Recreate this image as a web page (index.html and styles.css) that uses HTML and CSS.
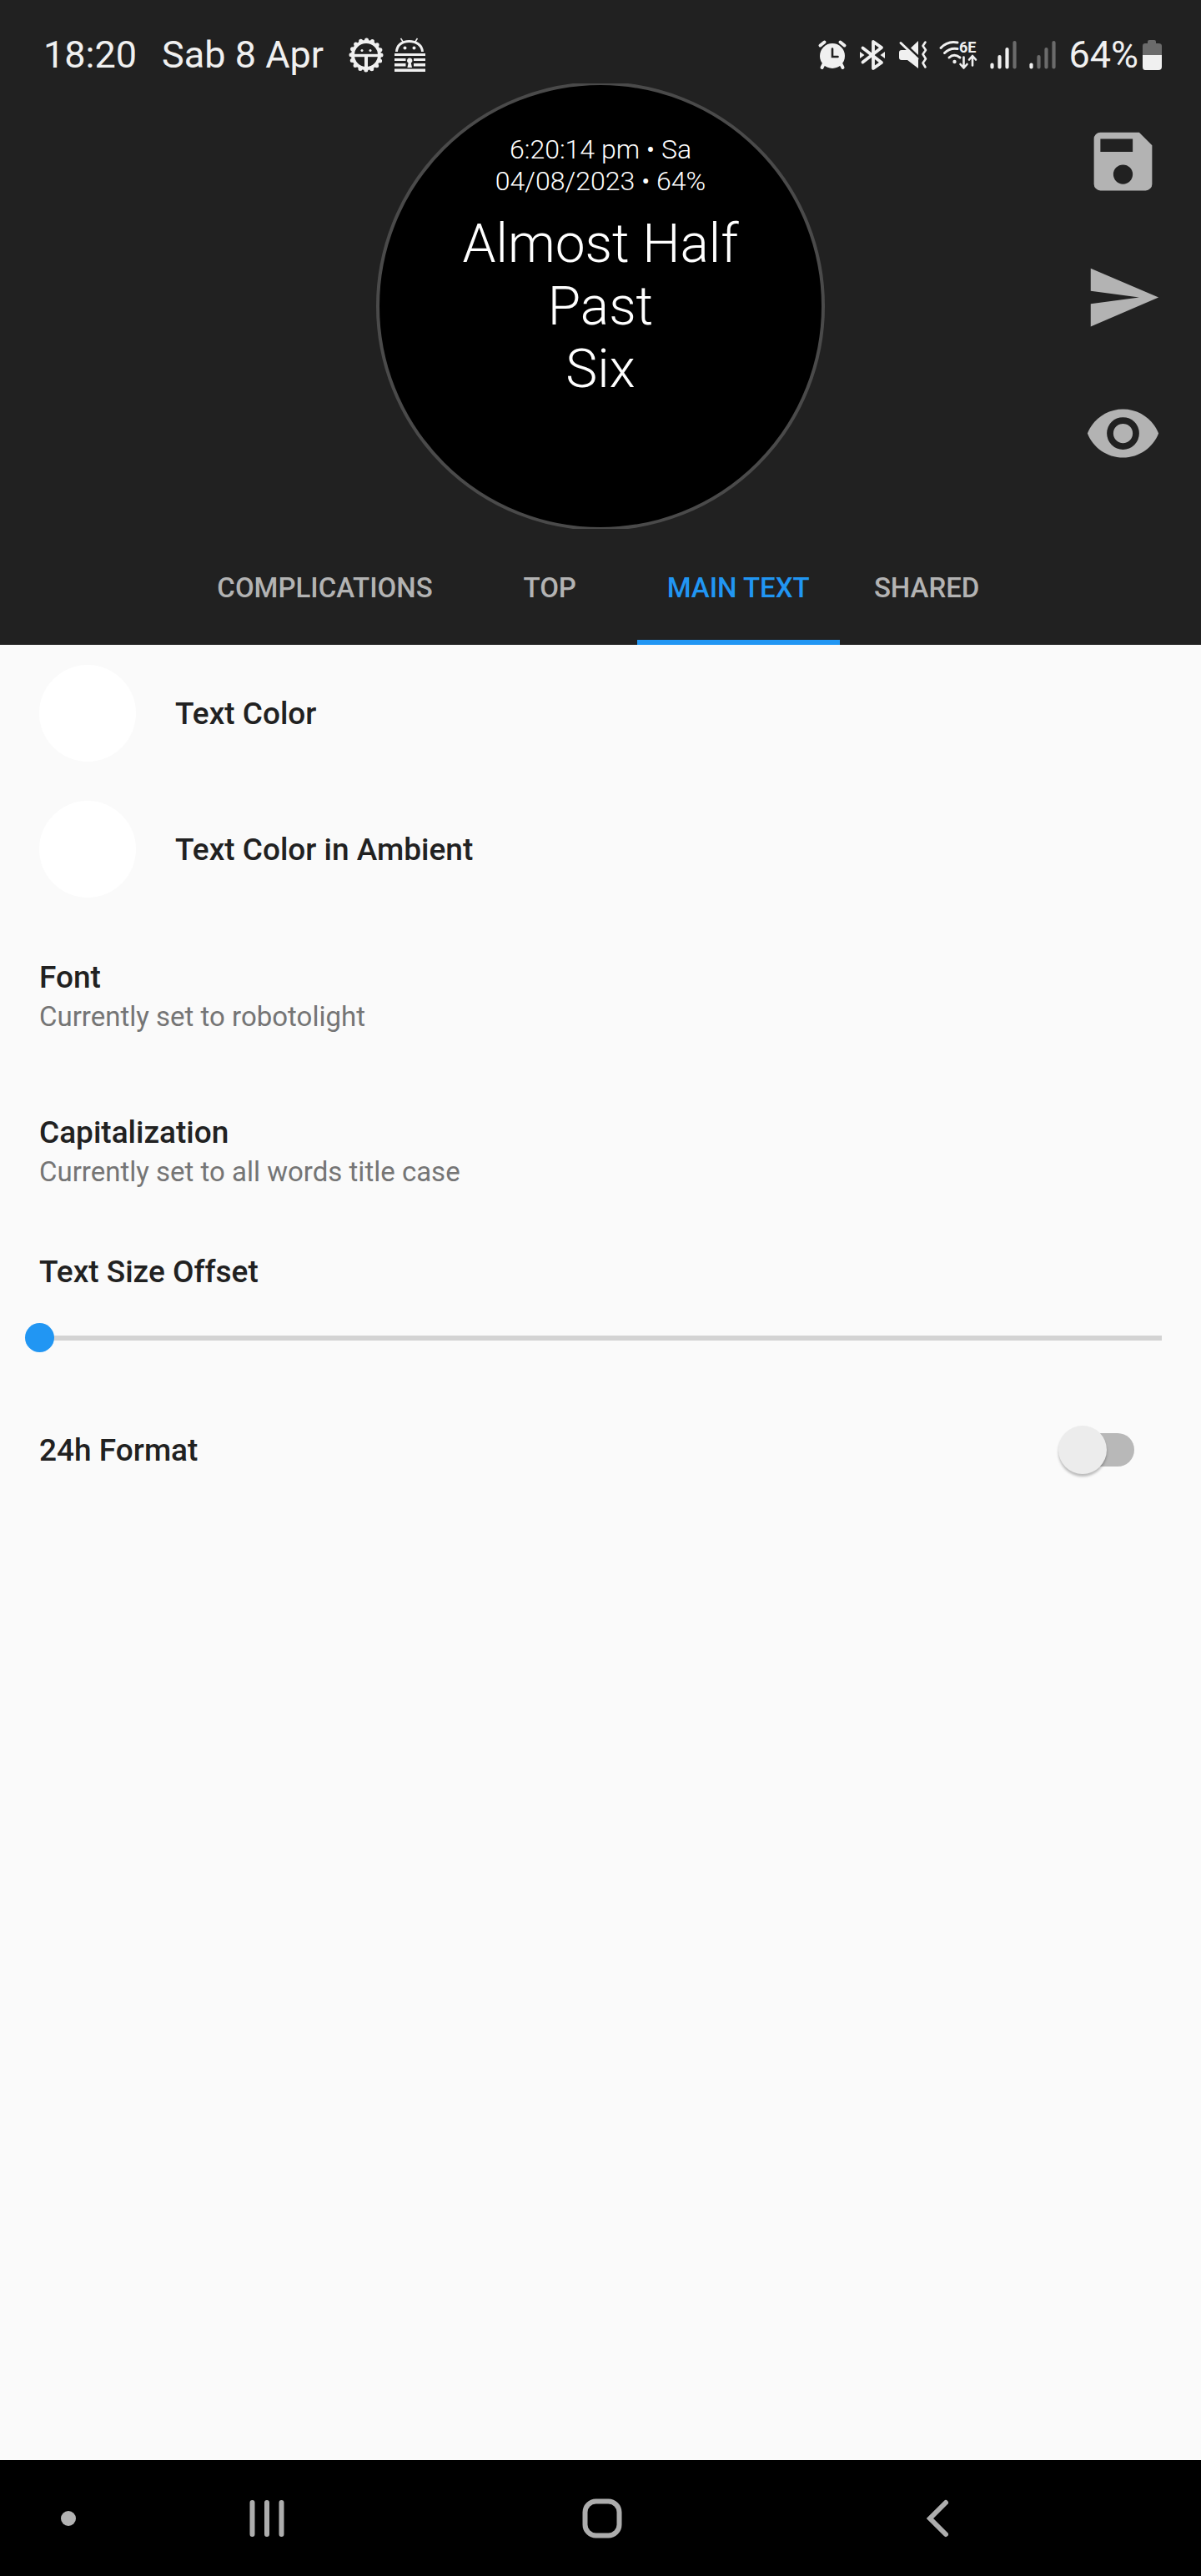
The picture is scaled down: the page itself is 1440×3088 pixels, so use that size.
FILE: index.html
```html
<!DOCTYPE html>
<html lang="en">
<head>
<meta charset="utf-8">
<meta name="viewport" content="width=device-width, initial-scale=1">
<title>Watch face settings</title>
<link rel="stylesheet" href="styles.css">
</head>
<body>
<header class="header">
  <div class="status">
    <div class="status-left">
      <time>18:20</time>
      <span>Sab 8 Apr</span>
      <div class="notifications">
        <svg width="42" height="42" viewBox="0 0 42 42" fill="none" stroke="currentColor" aria-hidden="true">
          <circle cx="21" cy="21" r="16" stroke-width="4"/>
          <circle cx="21" cy="21" r="18" stroke-width="5" stroke-linecap="round" stroke-dasharray="0 7.069"/>
          <path d="M6 21.500h30" stroke-width="3.400"/>
          <path d="M21 22v14" stroke-width="4"/>
          <g fill="currentColor" stroke="none"><circle cx="16" cy="15.500" r="1.500"/><circle cx="26" cy="15.500" r="1.500"/></g>
        </svg>
        <svg width="38" height="42" viewBox="0 0 38 42" aria-hidden="true">
          <path d="M3.500 17C4 9 10 4.500 18.500 4.500S34 9 34.500 17" fill="none" stroke="currentColor" stroke-width="3"/>
          <path d="M8.500 1l3 4.500M28.500 1l-3 4.500" stroke="currentColor" stroke-width="1.500"/>
          <g fill="currentColor">
            <circle cx="13.500" cy="12.500" r="2"/><circle cx="24.500" cy="12.500" r="2"/>
            <path d="M1 19h37v3H1zM1 25h13.500v3H1zM24 25h14v3H24zM1 31h13.500v3.500H1zM24 31h14v3.500H24zM1 37.500h37v3.500H1z"/>
            <path d="M19.200 24.500a3.200 3.200 0 0 1 1.600 6l1.200 5.500h-5.600l1.200-5.500a3.200 3.200 0 0 1 1.600-6z"/>
          </g>
        </svg>
      </div>
    </div>
    <div class="status-right">
      <svg width="34" height="36" viewBox="0 0 34 36" fill="none" stroke="currentColor" stroke-linecap="round" aria-hidden="true">
        <circle cx="17" cy="19" r="15" fill="currentColor" stroke="none"/>
        <path d="M2.500 6.500l5-4M31.500 6.500l-5-4" stroke-width="4"/>
        <path d="M6.500 29l-2 4M27.500 29l2 4" stroke-width="4"/>
        <path d="M17 10.500V20h6.500" stroke="#212121" stroke-width="2.600"/>
      </svg>
      <svg width="32" height="36" viewBox="0 0 32 36" fill="none" stroke="currentColor" stroke-linecap="round" stroke-linejoin="round" aria-hidden="true">
        <path d="M4.500 9.500L27 27 17 34V2l10 7L4.500 26.500" stroke-width="3.800"/>
        <path d="M1 14l5.500 4L1 22zM31 14l-5.500 4 5.500 4z" fill="currentColor" stroke="none"/>
      </svg>
      <svg width="34" height="36" viewBox="0 0 34 36" fill="none" stroke="currentColor" stroke-linecap="round" stroke-linejoin="round" aria-hidden="true">
        <path d="M4 12h7l13 12v10L11 24H4q-3 0-3-3v-6q0-3 3-3z" fill="currentColor" stroke="none"/>
        <path d="M24 1v17l-9-8.500z" fill="currentColor" stroke="none"/>
        <path d="M3 3.500l20 19" stroke-width="3"/>
        <path d="M32.500 2.500l-3 4.500 3.500 5-3.500 5 3.500 5.500-3.500 5 3 5" stroke-width="2.600"/>
      </svg>
      <svg class="wifi" width="46" height="36" viewBox="0 0 46 36" fill="none" stroke="currentColor" stroke-linecap="round" stroke-linejoin="round" aria-hidden="true">
        <path d="M2 9.500C8 3 15 1.500 22 3" stroke-width="3"/>
        <path d="M6.500 15.500Q13 9 22 10.500" stroke-width="3"/>
        <path d="M12 21q6-5.500 13 0" stroke-width="3"/>
        <circle cx="18.500" cy="26" r="2.200" fill="currentColor" stroke="none"/>
        <path d="M29.500 20.500V33m-4-4l4 4.500 4-4.500" stroke-width="2.600"/>
        <path d="M40 30.500V19.500m-4 4l4-4.500 4 4.500" stroke-width="2.600"/>
        <text x="24" y="15" fill="currentColor" stroke="none">6E</text>
      </svg>
      <svg width="32" height="36" viewBox="0 0 32 36" stroke="currentColor" stroke-width="4.200" stroke-linecap="round" aria-hidden="true">
        <path d="M2.500 29.500v3M11.500 20v12.500M20.500 11v21.500"/>
        <path d="M29.500 3v29.500" stroke="#6b6b6b"/>
      </svg>
      <svg width="32" height="36" viewBox="0 0 32 36" stroke="currentColor" stroke-width="4.200" stroke-linecap="round" aria-hidden="true">
        <path d="M2.500 29.500v3"/>
        <path d="M11.500 20v12.500M20.500 11v21.500M29.500 3v29.500" stroke="#6b6b6b"/>
      </svg>
      <div class="battery">
        <span>64%</span>
        <svg width="24" height="36" viewBox="0 0 24 36" aria-hidden="true">
          <path d="M1 18V7q0-3 3-3h3V2q0-2 2-2h6q2 0 2 2v2h3q4 0 4 3v11z" fill="#6b6b6b"/>
          <path d="M1 18h23v14q0 4-4 4H4q-3 0-3-4z" fill="currentColor"/>
        </svg>
      </div>
    </div>
  </div>

  <div class="preview">
    <div class="watch">
      <p class="watch-top">6:20:14 pm • Sa<br>04/08/2023 • 64%</p>
      <p class="watch-main">Almost Half<br>Past<br>Six</p>
    </div>
    <div class="actions">
      <button type="button" aria-label="Save"><svg viewBox="0 0 24 24" fill="currentColor"><path d="M15 9H5V5h10m-3 14a3 3 0 0 1-3-3 3 3 0 0 1 3-3 3 3 0 0 1 3 3 3 3 0 0 1-3 3m5-16H5a2 2 0 0 0-2 2v14a2 2 0 0 0 2 2h14a2 2 0 0 0 2-2V7l-4-4z"/></svg></button>
      <button type="button" aria-label="Send"><svg viewBox="0 0 24 24" fill="currentColor"><path d="M2 3v7l15 2-15 2v7l21-9z"/></svg></button>
      <button type="button" aria-label="Preview"><svg viewBox="0 0 24 24" fill="currentColor"><path d="M12 9a3 3 0 0 0-3 3 3 3 0 0 0 3 3 3 3 0 0 0 3-3 3 3 0 0 0-3-3m0 8a5 5 0 0 1-5-5 5 5 0 0 1 5-5 5 5 0 0 1 5 5 5 5 0 0 1-5 5m0-12.500C7 4.500 2.730 7.610 1 12c1.730 4.390 6 7.500 11 7.500s9.270-3.110 11-7.500c-1.730-4.390-6-7.500-11-7.500z"/></svg></button>
    </div>
  </div>

  <nav class="tabs">
    <a href="#complications">COMPLICATIONS</a>
    <a href="#top">TOP</a>
    <a href="#main-text" class="active" aria-current="page">MAIN TEXT</a>
    <a href="#shared">SHARED</a>
  </nav>
</header>

<main class="settings">
  <button type="button" class="color-row"><span class="swatch"></span><span class="title">Text Color</span></button>
  <button type="button" class="color-row"><span class="swatch"></span><span class="title">Text Color in Ambient</span></button>
  <button type="button" class="choice-row"><span class="title">Font</span><span class="summary">Currently set to robotolight</span></button>
  <button type="button" class="choice-row"><span class="title">Capitalization</span><span class="summary">Currently set to all words title case</span></button>
  <div class="slider-row">
    <label class="title" for="offset">Text Size Offset</label>
    <input id="offset" class="slider" type="range" min="0" max="100" value="0">
  </div>
  <div class="switch-row">
    <label class="title" for="format">24h Format</label>
    <input id="format" class="switch" type="checkbox" role="switch">
  </div>
</main>

<footer class="navbar">
  <button type="button" class="dot-button" aria-label="Hide navigation bar"><span class="dot"></span></button>
  <button type="button" aria-label="Recents"><svg width="48" height="48" viewBox="0 0 48 48" fill="none" stroke="currentColor" stroke-width="6" stroke-linecap="round"><path d="M6.500 5v38M24 5v38M41.500 5v38"/></svg></button>
  <button type="button" aria-label="Home"><svg width="48" height="48" viewBox="0 0 48 48" fill="none" stroke="currentColor" stroke-width="6"><rect x="3.500" y="3.500" width="41" height="41" rx="13"/></svg></button>
  <button type="button" aria-label="Back"><svg width="48" height="48" viewBox="0 0 48 48" fill="none" stroke="currentColor" stroke-width="6" stroke-linecap="round"><path d="M34 5L15 24l19 19"/></svg></button>
</footer>
</body>
</html>
```
FILE: styles.css
```css
* {
  box-sizing: border-box;
}

body {
  display: flex;
  flex-direction: column;
  min-height: 100vh;
  margin: 0;
  background: #fafafa;
  color: #212121;
  font-family: Roboto, sans-serif;
}

button {
  padding: 0;
  border: 0;
  background: none;
  color: inherit;
  font: inherit;
  text-align: left;
}

svg {
  display: block;
  flex: none;
  overflow: visible;
}

.header {
  background: #212121;
  color: #b3b3b3;
}

/* Status bar */
.status {
  display: flex;
  justify-content: space-between;
  align-items: center;
  height: 100px;
  padding: 32px 47px 0 52px;
  color: #f0f0f0;
  font-size: 45px;
  line-height: 52px;
}

.status-left {
  display: flex;
  align-items: center;
  gap: 30px;
}

.notifications {
  display: flex;
  gap: 12px;
}

.status-right {
  display: flex;
  align-items: center;
  gap: 15px;
}

.wifi {
  font-size: 18px;
  font-weight: 700;
}

.battery {
  display: flex;
  align-items: center;
  gap: 4px;
}

/* Watch preview */
.preview {
  display: grid;
  grid-template-columns: 1fr 538px 1fr;
  align-items: center;
  height: 534px;
  padding: 0 47px;
  overflow: hidden;
}

.watch {
  grid-column: 2;
  height: 538px;
  margin: -2px 0;
  padding-top: 58px;
  border: 4px solid #4a4a4a;
  border-radius: 50%;
  background: #000;
  color: #fff;
  font-weight: 300;
  text-align: center;
}

.watch p {
  margin: 0;
}

.watch-top {
  font-size: 32px;
  line-height: 38px;
}

.watch .watch-main {
  margin-top: 19px;
  font-size: 64px;
  line-height: 75px;
}

.actions {
  display: flex;
  flex-direction: column;
  align-items: flex-end;
  gap: 70px;
  padding-bottom: 22px;
}

.actions svg {
  width: 93px;
  height: 93px;
}

/* Tabs */
.tabs {
  display: flex;
  justify-content: center;
  height: 139px;
}

.tabs a {
  display: flex;
  justify-content: center;
  align-items: center;
  min-width: 209px;
  padding: 8px 36px 0;
  border-bottom: 6px solid transparent;
  color: #b3b3b3;
  font-size: 33px;
  font-weight: 500;
  text-decoration: none;
}

.tabs .active {
  border-color: #2196f3;
  color: #2196f3;
}

/* Settings list */
.settings {
  display: flex;
  flex: 1;
  flex-direction: column;
}

.title {
  padding-top: 3px;
  font-size: 37px;
  font-weight: 500;
  line-height: 46px;
}

.summary {
  color: #757575;
  font-size: 33px;
  line-height: 48px;
}

.color-row {
  display: flex;
  align-items: center;
  gap: 47px;
  height: 163px;
  padding: 0 47px;
}

.swatch {
  width: 116px;
  height: 116px;
  border-radius: 50%;
  background: #fff;
}

.choice-row {
  display: flex;
  flex-direction: column;
  padding: 47px 47px 42px;
}

.slider-row {
  display: flex;
  flex-direction: column;
  padding: 28px 30px 35px;
}

.slider-row .title {
  margin: 0 17px;
}

.slider {
  height: 35px;
  margin: 38px 0 0;
  appearance: none;
  background: linear-gradient(#d3d3d3, #d3d3d3) center / calc(100% - 35px) 6px no-repeat;
}

.slider::-webkit-slider-thumb {
  width: 35px;
  height: 35px;
  appearance: none;
  border-radius: 50%;
  background: #2196f3;
}

.switch-row {
  display: flex;
  justify-content: space-between;
  align-items: center;
  height: 163px;
  padding: 0 80px 0 47px;
}

.switch {
  position: relative;
  width: 80px;
  height: 40px;
  margin: 0;
  appearance: none;
  border-radius: 20px;
  background: #b8b8b8;
}

.switch::before {
  content: "";
  position: absolute;
  top: -9px;
  left: -11px;
  width: 58px;
  height: 58px;
  border-radius: 50%;
  background: #ececec;
  box-shadow: 0 3px 3px rgba(0, 0, 0, 0.25);
}

.switch:checked::before {
  left: 33px;
}

/* System navigation */
.navbar {
  display: grid;
  grid-template-columns: 119fr 402fr 402fr 402fr 115fr;
  height: 139px;
  background: #000;
  color: #adadad;
}

.navbar button {
  display: flex;
  justify-content: center;
  align-items: center;
}

.navbar .dot-button {
  padding-left: 45px;
}

.dot {
  width: 18px;
  height: 18px;
  border-radius: 50%;
  background: #b3b3b3;
}
```
